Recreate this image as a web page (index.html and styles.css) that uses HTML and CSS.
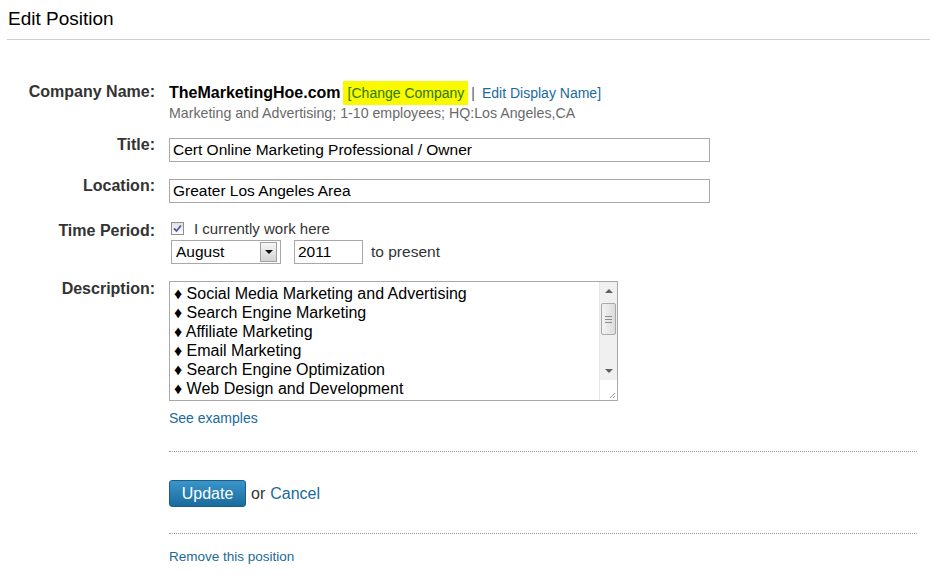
FILE: index.html
```html
<!DOCTYPE html>
<html>
<head>
<meta charset="utf-8">
<title>Edit Position</title>
<link rel="stylesheet" href="styles.css">
</head>
<body>
<div class="page">
  <h1 class="page-title">Edit Position</h1>
  <div class="form">
    <div class="row row-company">
      <div class="label">Company Name:</div>
      <div class="value">
        <div class="company-line"><span class="company-name">TheMarketingHoe.com</span><span class="hl"><a class="link-hl" href="#">[Change Company</a></span><span class="sep">|</span><a class="link" href="#">Edit Display Name]</a></div>
        <div class="company-meta">Marketing and Advertising; 1-10 employees; HQ:Los Angeles,CA</div>
      </div>
    </div>
    <div class="row row-title">
      <div class="label">Title:</div>
      <div class="value"><input class="text-input" type="text" value="Cert Online Marketing Professional / Owner"></div>
    </div>
    <div class="row row-location">
      <div class="label">Location:</div>
      <div class="value"><input class="text-input" type="text" value="Greater Los Angeles Area"></div>
    </div>
    <div class="row row-time">
      <div class="label label-time">Time Period:</div>
      <div class="value">
        <div class="check-line">
          <span class="check"><svg width="9" height="9" viewBox="0 0 9 9"><path d="M1 4.5 L3.5 7 L8 1.5" fill="none" stroke="#4b5a9e" stroke-width="1.8"/></svg></span>
          <span class="check-text">I currently work here</span>
        </div>
        <div class="date-line">
          <div class="select"><span class="select-text">August</span><span class="select-btn"><span class="tri"></span></span></div>
          <input class="year-input" type="text" value="2011">
          <span class="to-present">to present</span>
        </div>
      </div>
    </div>
    <div class="row row-desc">
      <div class="label">Description:</div>
      <div class="value">
        <div class="desc">
          <div class="desc-text">
            <div>♦ Social Media Marketing and Advertising</div>
            <div>♦ Search Engine Marketing</div>
            <div>♦ Affiliate Marketing</div>
            <div>♦ Email Marketing</div>
            <div>♦ Search Engine Optimization</div>
            <div>♦ Web Design and Development</div>
          </div>
          <div class="scroll">
            <div class="track">
              <div class="arrow-box"><span class="arrow-up"></span></div>
              <div class="thumb"><span></span><span></span><span></span></div>
              <div class="track-fill"></div>
              <div class="arrow-box"><span class="arrow-down"></span></div>
            </div>
            <div class="corner"><svg width="8" height="8" viewBox="0 0 8 8"><path d="M7 2 L2 7 M7 5 L5 7" stroke="#9a9a9a" stroke-width="1"/></svg></div>
          </div>
        </div>
        <a class="link see-examples" href="#">See examples</a>
      </div>
    </div>
    <div class="footer">
      <div class="divider"></div>
      <div class="actions">
        <button class="btn" type="button">Update</button>
        <span class="or">or</span>
        <a class="link cancel" href="#">Cancel</a>
      </div>
      <div class="divider divider-2"></div>
      <a class="link remove" href="#">Remove this position</a>
    </div>
  </div>
</div>
</body>
</html>
```
FILE: styles.css
```css
body {
  margin: 0;
  background: #fff;
  color: #333;
  font-family: "Liberation Sans", Arial, sans-serif;
}

a { text-decoration: none; }

.page {
  padding: 0 16px 0 7px;
}

.page-title {
  margin: 0;
  padding: 7px 0 8px 1px;
  font-size: 19px;
  line-height: 24px;
  font-weight: normal;
  color: #000;
  border-bottom: 1px solid #cfcfcf;
}

.form {
  margin-top: 42px;
}

.row {
  display: grid;
  grid-template-columns: 148px 1fr;
  column-gap: 14px;
  align-items: start;
}

.label {
  text-align: right;
  font-size: 16px;
  font-weight: bold;
  line-height: 20px;
  color: #333;
}

.row-company { margin-bottom: 13px; }
.row-title { margin-bottom: 14px; }
.row-location { margin-bottom: 15px; }
.row-time { margin-bottom: 15px; }

.label-time { margin-top: 3px; }

.company-line {
  height: 20px;
  line-height: 20px;
  white-space: nowrap;
  margin-top: 1px;
}

.company-name {
  font-size: 16px;
  font-weight: bold;
  color: #000;
}

.hl {
  background: #f9f900;
  font-size: 14px;
  line-height: 20px;
  padding: 4px 4px 4px 5px;
  margin-left: 2px;
}

.link-hl { color: #2c780c; }

.sep {
  font-size: 14px;
  color: #555;
  margin: 0 7px 0 3px;
}

.link {
  color: #1a6a9a;
  font-size: 14px;
}

.company-meta {
  margin-top: 1px;
  font-size: 14.2px;
  line-height: 18px;
  color: #6a6a6a;
}

.text-input {
  display: block;
  margin: 3px 0 0;
  width: 541px;
  height: 24px;
  box-sizing: border-box;
  border: 1px solid #a8a8a8;
  padding: 0 3px;
  font-family: "Liberation Sans", Arial, sans-serif;
  font-size: 15.5px;
  color: #000;
  outline: none;
}

.check-line {
  display: flex;
  align-items: center;
  height: 20px;
}

.check {
  width: 11px;
  height: 11px;
  margin-left: 2px;
  border: 1px solid #8e8f8f;
  background: linear-gradient(#e2e2e2, #fdfdfd);
  display: flex;
  align-items: center;
  justify-content: center;
}

.check-text {
  margin-left: 10px;
  font-size: 15px;
  color: #333;
}

.date-line {
  margin-top: 2px;
  display: flex;
  align-items: center;
}

.select {
  margin-left: 2px;
  width: 110px;
  height: 24px;
  box-sizing: border-box;
  border: 1px solid #a8a8a8;
  display: flex;
  background: #fff;
}

.select-text {
  flex: 1;
  padding-left: 4px;
  font-size: 15.5px;
  line-height: 22px;
  color: #000;
}

.select-btn {
  width: 17px;
  margin: 1px 3px 1px 0;
  box-sizing: border-box;
  border: 1px solid #a0a0a0;
  background: linear-gradient(#f6f6f6, #d3d3d3);
  display: flex;
  align-items: center;
  justify-content: center;
}

.tri {
  width: 0;
  height: 0;
  border-left: 4px solid transparent;
  border-right: 4px solid transparent;
  border-top: 4px solid #111;
}

.year-input {
  margin-left: 13px;
  width: 69px;
  height: 24px;
  box-sizing: border-box;
  border: 1px solid #a8a8a8;
  padding: 0 3px;
  font-family: "Liberation Sans", Arial, sans-serif;
  font-size: 15.5px;
  color: #000;
  outline: none;
}

.to-present {
  margin-left: 8px;
  font-size: 15.5px;
  color: #333;
}

.desc {
  margin-top: 2px;
  width: 449px;
  height: 120px;
  box-sizing: border-box;
  border: 1px solid #a8a8a8;
  display: flex;
}

.desc-text {
  flex: 1;
  padding: 2px 4px;
  font-size: 16px;
  line-height: 19px;
  color: #000;
  overflow: hidden;
  white-space: nowrap;
}

.scroll {
  width: 18px;
  display: flex;
  flex-direction: column;
}

.track {
  flex: 1;
  display: flex;
  flex-direction: column;
  background: #f0f0f0;
  border-left: 1px solid #e4e4e4;
}

.arrow-box {
  height: 18px;
  display: flex;
  align-items: center;
  justify-content: center;
}

.arrow-up, .arrow-down {
  width: 0;
  height: 0;
  border-left: 4px solid transparent;
  border-right: 4px solid transparent;
}

.arrow-up { border-bottom: 4px solid #606060; }
.arrow-down { border-top: 4px solid #606060; }

.thumb {
  margin: 3px 1px 0 1px;
  height: 32px;
  box-sizing: border-box;
  border: 1px solid #a9a9a9;
  border-radius: 2px;
  background: linear-gradient(90deg, #f3f3f3, #dcdcdc);
  display: flex;
  flex-direction: column;
  align-items: center;
  justify-content: center;
  gap: 2px;
}

.thumb span {
  width: 7px;
  height: 1px;
  background: #8a8a8a;
}

.track-fill { flex: 1; }

.corner {
  height: 19px;
  background: #fff;
  border-left: 1px solid #e4e4e4;
  display: flex;
  align-items: flex-end;
  justify-content: flex-end;
  padding: 0 1px 1px 0;
}

.see-examples {
  display: block;
  margin-top: 8px;
  line-height: 18px;
}

.footer {
  padding-left: 162px;
}

.divider {
  margin-top: 24px;
  margin-right: 13px;
  border-top: 1px dotted #999;
}

.actions {
  margin-top: 28px;
  display: flex;
  align-items: center;
}

.btn {
  width: 77px;
  height: 27px;
  padding: 0;
  border: 1px solid #1b5e86;
  border-radius: 3px;
  background: linear-gradient(#3a95ca, #1a6b9d);
  color: #fff;
  font-family: "Liberation Sans", Arial, sans-serif;
  font-size: 16px;
}

.or {
  margin-left: 5px;
  font-size: 16px;
  color: #333;
}

.cancel {
  margin-left: 5px;
  font-size: 16px;
}

.divider-2 {
  margin-top: 26px;
}

.remove {
  display: block;
  margin-top: 14px;
  font-size: 13.5px;
  line-height: 18px;
}
```
